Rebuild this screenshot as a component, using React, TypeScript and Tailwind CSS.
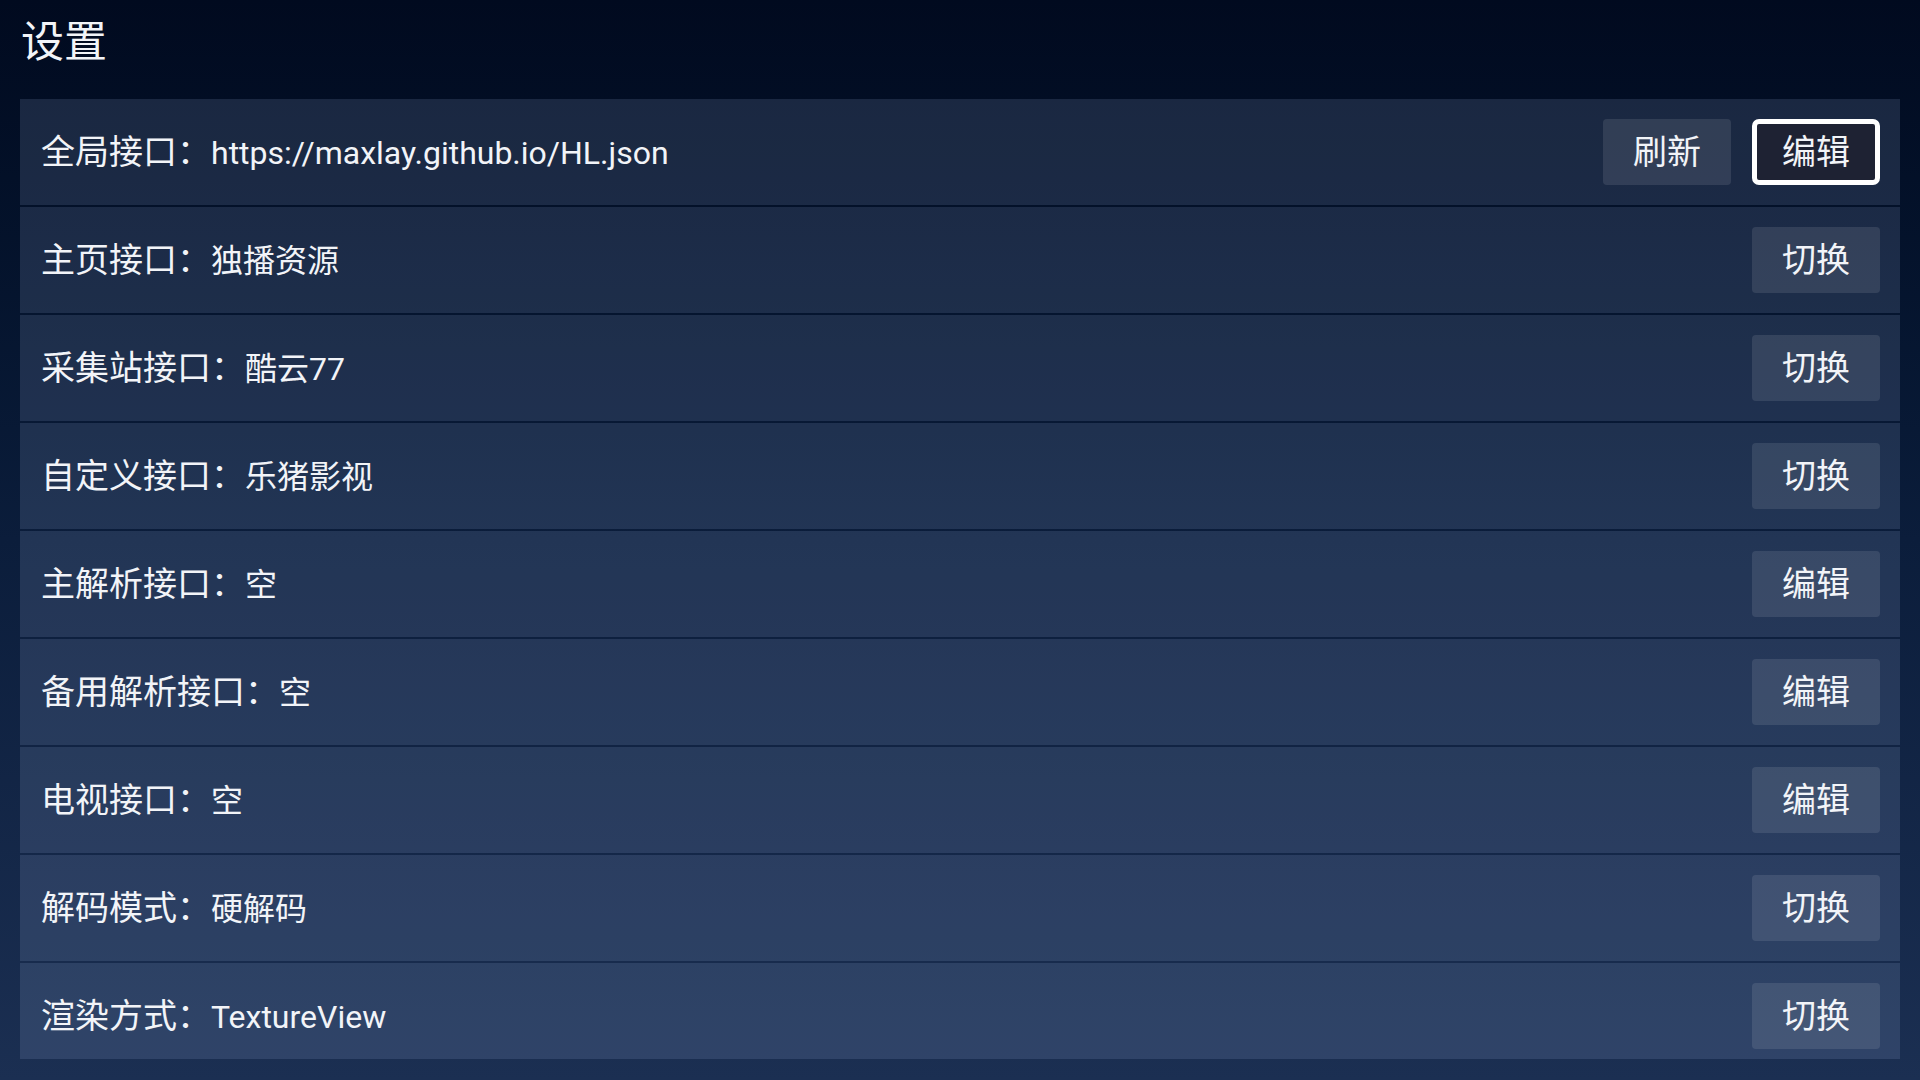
const rows = [
  { label: "全局接口", value: "https://maxlay.github.io/HL.json", buttons: ["刷新", "编辑"], focused: 1 },
  { label: "主页接口", value: "独播资源", buttons: ["切换"] },
  { label: "采集站接口", value: "酷云77", buttons: ["切换"] },
  { label: "自定义接口", value: "乐猪影视", buttons: ["切换"] },
  { label: "主解析接口", value: "空", buttons: ["编辑"] },
  { label: "备用解析接口", value: "空", buttons: ["编辑"] },
  { label: "电视接口", value: "空", buttons: ["编辑"] },
  { label: "解码模式", value: "硬解码", buttons: ["切换"] },
  { label: "渲染方式", value: "TextureView", buttons: ["切换"] },
];

const App = () => {
  return (
    <div
      className="w-[1920px] h-[1080px] overflow-hidden bg-gradient-to-b from-[#010a1f] via-[#0b1d3b] to-[#1b2f52] text-[#f2f4f8]"
      style={{ fontFamily: "Roboto, 'Noto Sans CJK SC', sans-serif" }}
    >
      <div className="h-[99px] pl-[21px] pt-[13px]">
        <h1 className="text-[43px] leading-[58px] font-normal">设置</h1>
      </div>
      <div className="mx-[20px] h-[960px] overflow-hidden flex flex-col gap-[2px]">
        {rows.map((row, index) => (
          <div
            key={index}
            className="shrink-0 h-[106px] flex items-center justify-between pl-[21px] pr-[20px] bg-[rgba(190,210,255,0.135)]"
          >
            <div className="text-[34px] leading-none whitespace-nowrap flex items-baseline">
              <span>{row.label}：</span>
              <span className="text-[32px]">{row.value}</span>
            </div>
            <div className="flex items-center gap-[21px]">
              {row.buttons.map((b, i) =>
                row.focused === i ? (
                  <div
                    key={i}
                    className="w-[128px] h-[66px] flex items-center justify-center rounded-[7px] border-[5px] border-white bg-[#1e2233] text-[34px]"
                  >
                    {b}
                  </div>
                ) : (
                  <div
                    key={i}
                    className="w-[128px] h-[66px] flex items-center justify-center rounded-[4px] bg-white/10 text-[34px]"
                  >
                    {b}
                  </div>
                )
              )}
            </div>
          </div>
        ))}
      </div>
    </div>
  );
};

export default App;
